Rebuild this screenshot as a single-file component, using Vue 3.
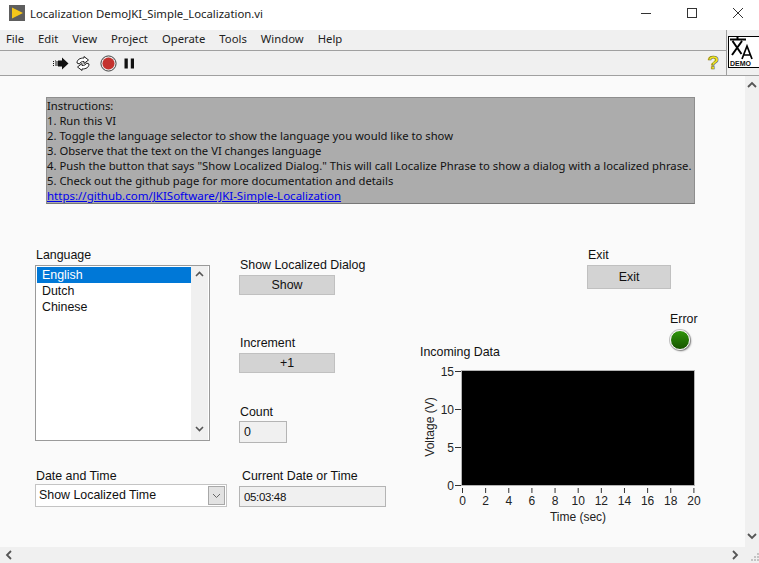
<script setup>
const menus = ['File', 'Edit', 'View', 'Project', 'Operate', 'Tools', 'Window', 'Help']
const languages = ['English', 'Dutch', 'Chinese']
const instructions = [
  'Instructions:',
  '1. Run this VI',
  '2. Toggle the language selector to show the language you would like to show',
  '3. Observe that the text on the VI changes language',
  '4. Push the button that says "Show Localized Dialog." This will call Localize Phrase to show a dialog with a localized phrase.',
  '5. Check out the github page for more documentation and details'
]
const xTicks = [0, 2, 4, 6, 8, 10, 12, 14, 16, 18, 20]
const yTicks = [0, 5, 10, 15]
function tickX(v) {
  return 42.5 + v * 11.57
}
function tickY(v) {
  return Math.round(121 - v * 7.6) + 0.5
}
</script>

<template>
  <div class="window">
    <div class="titlebar">
      <svg class="app-icon" width="16" height="16" viewBox="0 0 16 16">
        <rect width="16" height="16" fill="#5e5e5e" />
        <path d="M3 2.5 L14 8 L3 13.5 Z" fill="#f5c71a" />
      </svg>
      <span class="title">Localization DemoJKI_Simple_Localization.vi</span>
      <div class="win-buttons">
        <svg width="12" height="12" viewBox="0 0 12 12"><path d="M1 6.5 H11" stroke="#333" fill="none" /></svg>
        <svg width="12" height="12" viewBox="0 0 12 12"><rect x="1.5" y="1.5" width="9" height="9" stroke="#333" fill="none" /></svg>
        <svg width="12" height="12" viewBox="0 0 12 12"><path d="M1 1 L11 11 M11 1 L1 11" stroke="#333" fill="none" /></svg>
      </div>
    </div>

    <div class="bars">
      <div class="bars-left">
        <div class="menubar">
          <span v-for="m in menus" :key="m">{{ m }}</span>
        </div>
        <div class="toolbar">
          <svg width="16" height="13" viewBox="0 0 16 13">
            <path d="M5 3.5 H9 V0.5 L15.5 6.5 L9 12.5 V9.5 H5 Z" fill="#111" />
            <path d="M0.5 4 V9 M2.5 3.5 V9.5" stroke="#111" stroke-dasharray="1 1" />
            <path d="M4 4 V9" stroke="#111" />
          </svg>
          <svg class="run-cont" width="16" height="15" viewBox="0 0 16 15">
            <path d="M2 7 C2 3.5 5 2 9 2 V0.5 L13.5 4 L9 7.5 V5.5 C7 5.5 5 6 4.5 8 Z" fill="#fff" stroke="#222" />
            <path d="M14 8 C14 11.5 11 13 7 13 V14.5 L2.5 11 L7 7.5 V9.5 C9 9.5 11 9 11.5 7 Z" fill="#fff" stroke="#222" />
          </svg>
          <svg class="abort" width="17" height="17" viewBox="0 0 17 17">
            <circle cx="8.5" cy="8.5" r="7.6" fill="#e6e6e6" stroke="#444" />
            <circle cx="8.5" cy="8.5" r="6" fill="#c4322e" />
          </svg>
          <svg class="pause" width="11" height="11" viewBox="0 0 11 11">
            <path d="M0.5 0.5 H3.8 V10.5 H0.5 Z M6.8 0.5 H10 V10.5 H6.8 Z" fill="#111" />
          </svg>
          <span class="help">?</span>
        </div>
      </div>
      <div class="vi-icon-slot">
        <div class="vi-icon">
          <svg width="28" height="23" viewBox="0 0 28 23">
            <path d="M1 2.5 H17 M8.5 0 V2.5 M3.5 4 L12.5 17 M13 4 L3 18" stroke="#000" stroke-width="2" fill="none" />
            <path d="M13 22 L18 9 L23 22 M14.5 18 H21.5" stroke="#000" stroke-width="1.7" fill="none" />
          </svg>
          <span>DEMO</span>
        </div>
      </div>
    </div>

    <div class="middle">
      <div class="panel">
        <div class="instructions">
          <div v-for="line in instructions" :key="line">{{ line }}</div>
          <a class="link">https://github.com/JKISoftware/JKI-Simple-Localization</a>
        </div>

        <div class="controls">
          <div class="col col-lang">
            <label class="lbl">Language</label>
            <div class="listbox">
              <div class="list-items">
                <div
                  v-for="(l, i) in languages"
                  :key="l"
                  class="list-item"
                  :class="{ selected: i === 0 }"
                >{{ l }}</div>
              </div>
              <div class="list-scroll">
                <svg width="9" height="6" viewBox="0 0 9 6"><path d="M1 5 L4.5 1.5 L8 5" stroke="#555" stroke-width="1.6" fill="none" /></svg>
                <svg width="9" height="6" viewBox="0 0 9 6"><path d="M1 1 L4.5 4.5 L8 1" stroke="#555" stroke-width="1.6" fill="none" /></svg>
              </div>
            </div>
            <label class="lbl date-lbl">Date and Time</label>
            <div class="dropdown">
              <span class="drop-text">Show Localized Time</span>
              <div class="drop-btn">
                <svg width="9" height="6" viewBox="0 0 9 6"><path d="M1 1 L4.5 4.5 L8 1" stroke="#666" fill="none" /></svg>
              </div>
            </div>
          </div>

          <div class="col col-mid">
            <label class="lbl show-lbl">Show Localized Dialog</label>
            <button class="btn btn-mid">Show</button>
            <label class="lbl inc-lbl">Increment</label>
            <button class="btn btn-mid">+1</button>
            <label class="lbl count-lbl">Count</label>
            <div class="indicator count">0</div>
            <label class="lbl current-lbl">Current Date or Time</label>
            <div class="indicator current">05:03:48</div>
          </div>

          <div class="col col-right">
            <label class="lbl exit-lbl">Exit</label>
            <button class="btn btn-exit">Exit</button>
            <div class="error-box">
              <label class="lbl">Error</label>
              <div class="led"></div>
            </div>
            <label class="lbl data-lbl">Incoming Data</label>
            <svg class="chart" width="290" height="165" viewBox="0 0 290 165">
              <rect x="41.5" y="6.5" width="233" height="115" fill="#000" stroke="#b4b4b4" />
              <text class="axis-title" transform="translate(14 63) rotate(-90)" text-anchor="middle">Voltage (V)</text>
              <g v-for="v in yTicks" :key="'y' + v">
                <path :d="`M35 ${tickY(v)} H41`" stroke="#333" />
                <text class="tick" x="34" :y="tickY(v) + 4" text-anchor="end">{{ v }}</text>
              </g>
              <g v-for="v in xTicks" :key="'x' + v">
                <path :d="`M${tickX(v)} 124 V129`" stroke="#333" />
                <text class="tick" :x="tickX(v)" y="141" text-anchor="middle">{{ v }}</text>
              </g>
              <text class="axis-title" x="158" y="157" text-anchor="middle">Time (sec)</text>
            </svg>
          </div>
        </div>
      </div>
      <div class="vscroll">
        <svg width="10" height="7" viewBox="0 0 10 7"><path d="M1 6 L5 2 L9 6" stroke="#555" stroke-width="1.8" fill="none" /></svg>
        <svg width="10" height="7" viewBox="0 0 10 7"><path d="M1 1 L5 5 L9 1" stroke="#555" stroke-width="1.8" fill="none" /></svg>
      </div>
    </div>

    <div class="hscroll">
      <svg width="7" height="10" viewBox="0 0 7 10"><path d="M6 1 L2 5 L6 9" stroke="#555" stroke-width="1.8" fill="none" /></svg>
      <svg width="7" height="10" viewBox="0 0 7 10"><path d="M1 1 L5 5 L1 9" stroke="#555" stroke-width="1.8" fill="none" /></svg>
      <svg class="grip" width="10" height="10" viewBox="0 0 10 10">
        <path d="M8 1 h2 v2 h-2 Z M5 4 h2 v2 h-2 Z M8 4 h2 v2 h-2 Z M2 7 h2 v2 h-2 Z M5 7 h2 v2 h-2 Z M8 7 h2 v2 h-2 Z" fill="#c4c4c4" />
      </svg>
    </div>
  </div>
</template>

<style scoped>
.window {
  width: 759px;
  height: 563px;
  display: flex;
  flex-direction: column;
  overflow: hidden;
  background: #fff;
  font-family: "Liberation Sans", Arial, sans-serif;
  font-size: 12.4px;
  color: #111;
}

.titlebar {
  height: 30px;
  flex: none;
  display: flex;
  align-items: center;
  padding-left: 9px;
  box-sizing: border-box;
}
.app-icon {
  margin-top: -4px;
}
.title {
  margin: -3px 0 0 5px;
  font-family: "Noto Sans", sans-serif;
  font-size: 11.35px;
  color: #222;
}
.win-buttons {
  margin-left: auto;
  display: flex;
  gap: 34px;
  padding-right: 15px;
  margin-top: -4px;
}

.bars {
  height: 46px;
  flex: none;
  display: flex;
  background: #f0f0f0;
  border-bottom: 1px solid #a0a0a0;
  box-sizing: border-box;
}
.bars-left {
  flex: 1;
  display: flex;
  flex-direction: column;
}
.menubar {
  height: 21px;
  box-sizing: border-box;
  display: flex;
  align-items: center;
  gap: 14px;
  padding: 0 0 3px 6px;
  border-bottom: 1px solid #a0a0a0;
  font-family: "Noto Sans", sans-serif;
  font-size: 11.3px;
  color: #222;
}
.toolbar {
  flex: 1;
  display: flex;
  align-items: center;
  padding-left: 53px;
}
.run-cont {
  margin-left: 6px;
}
.abort {
  margin-left: 9px;
}
.pause {
  margin-left: 7px;
}
.help {
  margin-left: auto;
  margin-right: 7px;
  font-weight: bold;
  font-size: 19px;
  line-height: 20px;
  color: #f6ea1e;
  -webkit-text-stroke: 0.6px #5f5f1c;
}
.vi-icon-slot {
  width: 33px;
  flex: none;
  border-left: 1px solid #a0a0a0;
  padding: 6px 0 0 1px;
  box-sizing: border-box;
}
.vi-icon {
  width: 32px;
  height: 32px;
  box-sizing: border-box;
  background: #fff;
  border: 1px solid #000;
  display: flex;
  flex-direction: column;
  overflow: hidden;
}
.vi-icon svg {
  flex: none;
}
.vi-icon span {
  font-size: 7px;
  font-weight: bold;
  padding-left: 1px;
  line-height: 7px;
}

.middle {
  flex: 1;
  display: flex;
  min-height: 0;
}
.panel {
  flex: 1;
  background: #fafafa;
  padding: 21px 0 0 46px;
  box-sizing: border-box;
}
.vscroll {
  width: 14px;
  flex: none;
  background: #f0f0f0;
  display: flex;
  flex-direction: column;
  justify-content: space-between;
  align-items: center;
  padding: 5px 0 7px;
  box-sizing: border-box;
}
.hscroll {
  height: 16px;
  flex: none;
  background: #f0f0f0;
  display: flex;
  align-items: center;
  padding: 0 0 0 5px;
  gap: 720px;
  position: relative;
}
.grip {
  position: absolute;
  right: 0;
  bottom: 1px;
}

.instructions {
  width: 649px;
  height: 107px;
  box-sizing: border-box;
  background: #acacac;
  border: 1px solid #8e8e8e;
  border-bottom-color: #777;
  font-family: "Noto Sans", sans-serif;
  font-size: 11.26px;
  line-height: 15px;
  white-space: nowrap;
  color: #111;
}
.link {
  font-size: 11.5px;
  color: #0000ee;
  text-decoration: underline;
}

.controls {
  display: flex;
  margin: 44px 0 0 -11px;
}
.col {
  display: flex;
  flex-direction: column;
  align-items: flex-start;
}
.col-lang {
  width: 204px;
}
.col-mid {
  width: 181px;
}
.col-right {
  width: 290px;
}
.lbl {
  display: block;
  height: 14px;
  line-height: 14px;
  padding-left: 1px;
  white-space: nowrap;
}

.listbox {
  width: 175px;
  height: 176px;
  margin-top: 3px;
  box-sizing: border-box;
  background: #fff;
  border: 1px solid #9a9a9a;
  padding: 1px;
  display: flex;
}
.list-items {
  flex: 1;
}
.list-item {
  height: 16px;
  line-height: 16px;
  padding-left: 5px;
  color: #111;
}
.list-item.selected {
  background: #0078d7;
  color: #fff;
}
.list-scroll {
  width: 17px;
  background: #f0f0f0;
  display: flex;
  flex-direction: column;
  justify-content: space-between;
  align-items: center;
  padding: 5px 0 8px;
  box-sizing: border-box;
  margin: -1px 0;
}
.date-lbl {
  margin-top: 28px;
}
.dropdown {
  width: 192px;
  height: 23px;
  margin-top: 1px;
  box-sizing: border-box;
  background: #fff;
  border: 1px solid #c4c4c4;
  padding-left: 3px;
  display: flex;
  align-items: center;
  justify-content: space-between;
}
.drop-text {
  margin-top: -2px;
}
.drop-btn {
  width: 17px;
  height: 19px;
  margin-right: 1px;
  box-sizing: border-box;
  background: #e2e2e2;
  border: 1px solid #a8a8a8;
  display: flex;
  align-items: center;
  justify-content: center;
}

.btn {
  display: block;
  padding: 0;
  box-sizing: border-box;
  background: #d3d3d3;
  border: 1px solid #c0c0c0;
  font-family: inherit;
  font-size: 12.4px;
  color: #111;
}
.btn-mid {
  width: 96px;
  height: 20px;
}
.btn-exit {
  width: 84px;
  height: 24px;
  margin: 3px 0 0 167px;
}
.show-lbl {
  margin-top: 10px;
  margin-bottom: 3px;
}
.inc-lbl {
  margin-top: 41px;
  margin-bottom: 3px;
}
.count-lbl {
  margin-top: 32px;
  margin-bottom: 2px;
}
.current-lbl {
  margin-top: 26px;
  margin-left: 2px;
  margin-bottom: 3px;
}
.indicator {
  box-sizing: border-box;
  background: #f0f0f0;
  border: 1px solid #b4b4b4;
  display: flex;
  align-items: center;
  padding-left: 4px;
}
.count {
  width: 48px;
  height: 22px;
}
.current {
  width: 147px;
  height: 21px;
  font-size: 11.5px;
  letter-spacing: -0.35px;
}
.exit-lbl {
  margin-left: 167px;
}
.error-box {
  margin: 23px 0 0 250px;
  width: 28px;
  display: flex;
  flex-direction: column;
  align-items: flex-start;
}
.error-box .lbl {
  padding-left: 0;
}
.led {
  width: 20px;
  height: 20px;
  margin-top: 4px;
  box-sizing: border-box;
  border-radius: 50%;
  background: linear-gradient(#2f950c, #175400);
  border: 1px solid #f4f4f4;
  box-shadow: 1px 1px 2px #777, 0 0 0 1px #c4c4c4;
}
.data-lbl {
  margin-top: -5px;
  margin-bottom: 5px;
  padding-left: 0;
}
.chart {
  display: block;
}
.tick,
.axis-title {
  font-family: "Liberation Sans", Arial, sans-serif;
  font-size: 12px;
  fill: #222;
}
</style>

<style>
html,
body {
  margin: 0;
  background: #fff;
}
</style>
